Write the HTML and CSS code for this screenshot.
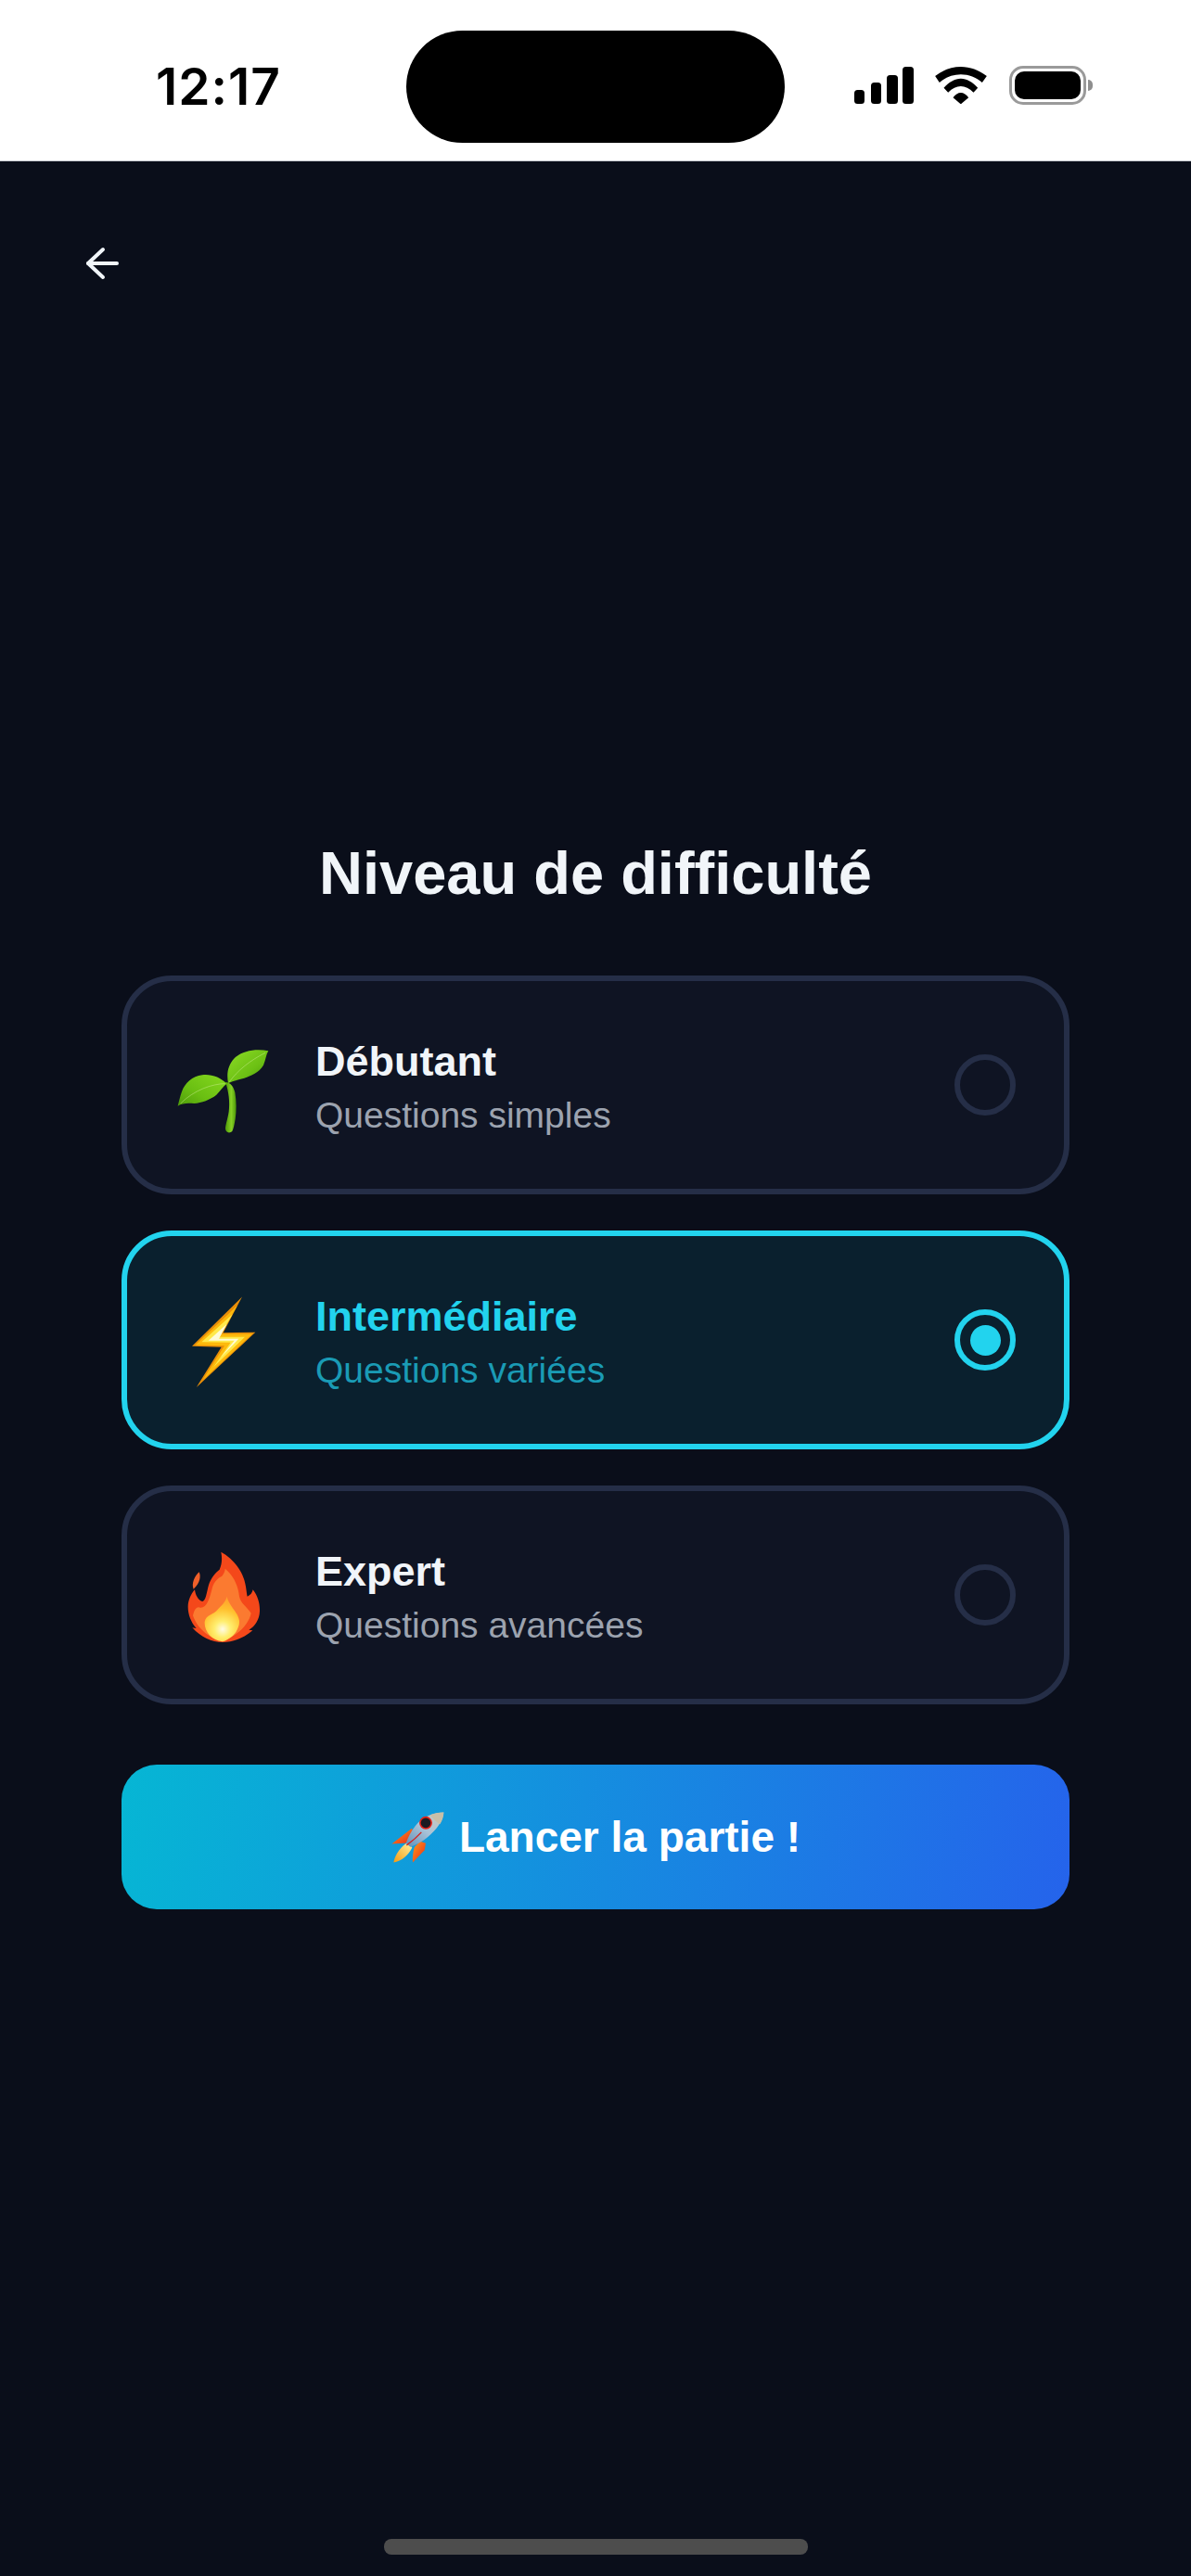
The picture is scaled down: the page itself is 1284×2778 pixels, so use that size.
FILE: index.html
```html
<!DOCTYPE html>
<html lang="fr">
<head>
<meta charset="utf-8">
<title>Niveau de difficulté</title>
<link rel="stylesheet" href="styles.css">
</head>
<body>
<div class="phone">
  <header class="status">
    <span class="clock">12:17</span>
    <div class="island"></div>
    <div class="status-icons">
      <svg class="signal" viewBox="0 0 64 40"><rect x="0" y="25" width="11" height="15" rx="3.5"/><rect x="18" y="17" width="11" height="23" rx="3.5"/><rect x="35" y="9" width="12" height="31" rx="3.5"/><rect x="52" y="0" width="12" height="40" rx="3.5"/></svg>
      <svg class="wifi" viewBox="445 97 167 120"><path d="M445 127C470 108 498 97 528 97S586 108 612 127L597 148C578 131 553 122 528 122S478 131 459 148Z"/><path d="M473 165C490 146 509 135 528 135S566 146 583 165L569 180C556 167 542 160 528 160S500 167 487 180Z"/><path d="M503 197C510 187 519 181 528 181S546 187 553 197L528 218Z"/></svg>
      <div class="battery"><div class="battery-fill"></div></div>
      <div class="battery-tip"></div>
    </div>
  </header>
  <main class="screen">
    <button class="back" aria-label="Retour">
      <svg viewBox="0 0 38 38" fill="none" stroke="#f1f5f9" stroke-width="4" stroke-linecap="round" stroke-linejoin="round"><path d="M35 19H4"/><path d="M20 4 4 19l16 15"/></svg>
    </button>
    <section class="panel">
      <h1 class="title">Niveau de difficulté</h1>
      <div class="options">
        <div class="option">
          <svg class="emoji" viewBox="207 210 312 360">
            <defs>
              <linearGradient id="leaf" x1="0" y1="0" x2="1" y2="1"><stop offset="0" stop-color="#8ddc26"/><stop offset=".6" stop-color="#6cc014"/><stop offset="1" stop-color="#4a960a"/></linearGradient>
              <linearGradient id="leaf2" x1="1" y1="0" x2="0" y2="1"><stop offset="0" stop-color="#86d81f"/><stop offset=".6" stop-color="#6abf12"/><stop offset="1" stop-color="#4e9b0a"/></linearGradient>
              <linearGradient id="stem" x1="0" y1="0" x2="1" y2="0"><stop offset="0" stop-color="#4f9c08"/><stop offset=".55" stop-color="#86d024"/><stop offset="1" stop-color="#4b9508"/></linearGradient>
            </defs>
            <path fill="url(#stem)" d="M369 380C386 382 396 396 400 414 405 444 405 474 401 500 398 518 395 532 391 540 384 547 370 546 369 532 369 520 376 502 380 476 384 446 380 412 369 380Z"/>
            <path fill="url(#leaf)" d="M378 384C372 352 378 326 398 304 424 278 470 272 508 280 500 292 500 308 492 326 478 350 452 360 430 368 408 374 392 378 378 384Z"/>
            <path fill="url(#leaf2)" d="M373 386C354 366 322 354 294 358 262 362 238 384 228 412 222 428 219 444 215 458 230 448 248 448 268 450 292 448 320 438 340 422 352 410 362 394 373 386Z"/>
            <path fill="none" stroke="#d2f29c" stroke-width="2" opacity=".65" d="M382 380C406 346 446 312 498 286M368 386C328 386 268 406 224 450"/>
          </svg>
          <div class="labels"><div class="name">Débutant</div><div class="desc">Questions simples</div></div>
          <div class="radio"></div>
        </div>
        <div class="option option-active">
          <svg class="emoji" viewBox="207 193.500 312 360">
            <path fill="#e88d08" d="M423 234 261 394 356 397 275 527 466 349 362 350Z"/>
            <path fill="#fdb90c" d="M408 262 272 390 366 392 295 504 456 354 354 354Z"/>
            <path fill="#ffe94a" d="M392 290 292 380 386 382 330 462 432 364 350 364Z"/>
            <path fill="#fffbd6" d="M374 322 314 376 398 376 354 430 412 370 348 370Z"/>
          </svg>
          <div class="labels"><div class="name">Intermédiaire</div><div class="desc">Questions variées</div></div>
          <div class="radio"><div class="radio-dot"></div></div>
        </div>
        <div class="option">
          <svg class="emoji" viewBox="207 177 312 360">
            <defs>
              <radialGradient id="core" cx="360" cy="468" r="120" gradientUnits="userSpaceOnUse"><stop offset="0" stop-color="#fffbe6"/><stop offset=".22" stop-color="#ffee6e"/><stop offset=".55" stop-color="#ffc02e"/><stop offset="1" stop-color="#ff8f2c"/></radialGradient>
            </defs>
            <path fill="#f4481a" d="M355 218C395 240 428 282 435 330 437 342 438 354 440 362 450 358 456 350 458 340 474 360 481 386 480 410 479 436 465 458 445 470L457 472C430 496 395 510 360 510 325 510 290 494 262 463L275 465C258 446 248 420 248 395 248 374 258 354 270 340 272 358 282 376 295 378 306 376 308 350 315 325 322 302 338 284 350 275 358 258 359 238 355 218Z"/>
            <path fill="#f0602a" d="M284 283C290 296 288 318 266 338 258 320 270 296 284 283Z"/>
            <path fill="#fb7a30" d="M368 272C398 296 410 330 414 362 418 384 440 396 452 416 446 444 420 484 360 506 320 500 278 466 264 424 268 404 276 392 288 398 308 400 318 370 326 336 332 312 348 300 358 296 364 288 368 280 368 272Z"/>
            <path fill="url(#core)" d="M374 362C380 392 408 410 414 440 416 466 396 496 360 508 324 504 300 474 302 444 306 420 328 424 346 402 358 390 370 378 374 362Z"/>
          </svg>
          <div class="labels"><div class="name">Expert</div><div class="desc">Questions avancées</div></div>
          <div class="radio"></div>
        </div>
      </div>
      <button class="launch">
        <svg class="rocket" viewBox="66 160 180 170">
          <defs>
            <linearGradient id="hull" x1="0" y1="1" x2="1" y2="0"><stop offset="0" stop-color="#5f8fb8"/><stop offset=".5" stop-color="#a9c3d8"/><stop offset="1" stop-color="#cfc9b8"/></linearGradient>
            <linearGradient id="fin" x1="0" y1="0" x2="1" y2="1"><stop offset="0" stop-color="#ff9a1a"/><stop offset="1" stop-color="#e8261a"/></linearGradient>
            <linearGradient id="fire" x1="1" y1="0" x2="0" y2="1"><stop offset="0" stop-color="#fff3a0"/><stop offset="1" stop-color="#f59a0f"/></linearGradient>
          </defs>
          <path fill="url(#fin)" d="M135 216 70 266c18-2 40-2 52-4l22-20z"/>
          <path fill="url(#fin)" d="M180 264l-4 22-38 40c-2-16 2-40 6-50l18-18z"/>
          <path fill="url(#fire)" d="M122 262c-20 8-42 38-46 64 26-4 48-24 60-48z"/>
          <path fill="url(#hull)" d="M238 164c-30 0-70 14-92 44-14 18-24 38-30 56l14 12c20-8 40-18 56-32 30-26 50-52 52-80z"/>
          <path fill="#c8bfa8" d="M238 164c-14 0-30 2-44 8 8 10 18 22 32 30 8-12 12-26 12-38z"/>
          <circle cx="180" cy="198" r="21" fill="#e2231a"/>
          <circle cx="180" cy="198" r="16" fill="#1c1c22"/>
          <path fill="none" stroke="#d81e1a" stroke-width="4" d="M118 270c14-10 30-22 48-42"/>
        </svg>
        <span>Lancer la partie !</span>
      </button>
    </section>
    <div class="home-bar"></div>
  </main>
</div>
</body>
</html>
```
FILE: styles.css
```css
* { box-sizing: border-box; }
html, body { margin: 0; padding: 0; }
body { background: #0a0e1a; font-family: "Liberation Sans", Arial, sans-serif; }
.phone { width: 1284px; height: 2778px; display: flex; flex-direction: column; overflow: hidden; }

.status { height: 174px; flex: none; background: #fff; border-bottom: 1px solid #c9ccd2; position: relative; }
.clock { position: absolute; left: 168px; top: 63px; font-family: Inter, "Liberation Sans", sans-serif; font-size: 55px; line-height: 60px; font-weight: 600; letter-spacing: 1px; color: #000; }
.island { position: absolute; left: 438px; top: 33px; width: 408px; height: 121px; border-radius: 61px; background: #000; }
.status-icons { position: absolute; left: 921px; top: 71px; display: flex; align-items: center; }
.signal { width: 64px; height: 40px; display: block; margin-right: 23px; }
.wifi { width: 56px; height: 40px; display: block; margin-right: 24px; }
.battery { width: 83px; height: 42px; border: 3px solid #9a9a9a; border-radius: 15px; padding: 3px; }
.battery-fill { width: 100%; height: 100%; background: #000; border-radius: 10px; }
.battery-tip { width: 5px; height: 12px; margin-left: 2px; background: #8e8e8e; border-radius: 0 5px 5px 0; }

.screen { flex: 1; position: relative; background: #0a0e1a; display: flex; flex-direction: column; }
.back { width: 38px; height: 38px; margin: 91px 0 0 91px; padding: 0; background: none; border: 0; display: block; }
.back svg { width: 38px; height: 38px; display: block; }

.panel { margin: 601px 131px 0; display: flex; flex-direction: column; }
.title { margin: 0; font-size: 65px; line-height: 76px; font-weight: 700; color: #f1f5f9; text-align: center; }
.options { margin-top: 72px; display: flex; flex-direction: column; gap: 39px; }
.option { height: 236px; border: 6px solid #252e47; border-radius: 54px; background: #0f1423; display: flex; align-items: center; padding: 0 52px; }
.option-active { border-color: #22d3ee; background: #0a202e; }
.emoji { width: 104px; height: 120px; flex: none; display: block; margin-right: 47px; }
.labels { flex: 1; display: flex; flex-direction: column; gap: 4px; padding-top: 6px; }
.name { font-size: 45px; line-height: 56px; font-weight: 700; color: #f1f5f9; }
.desc { font-size: 39px; line-height: 52px; color: #9ca3af; }
.option-active .name { color: #22d3ee; }
.option-active .desc { color: #1a9bb5; }
.radio { width: 66px; height: 66px; flex: none; border: 6px solid #252e47; border-radius: 50%; display: flex; align-items: center; justify-content: center; }
.option-active .radio { border-color: #22d3ee; }
.radio-dot { width: 33px; height: 33px; border-radius: 50%; background: #22d3ee; }

.launch { margin-top: 65px; height: 156px; border: 0; border-radius: 38px; background: linear-gradient(100deg, #06b6d4, #2563eb); display: flex; align-items: center; justify-content: center; gap: 14px; color: #fff; font-family: inherit; font-size: 46px; font-weight: 700; padding: 0; }
.rocket { width: 60px; height: 57px; display: block; }

.home-bar { position: absolute; left: 414px; bottom: 23px; width: 457px; height: 17px; border-radius: 8px; background: #4d4d4d; }
```
